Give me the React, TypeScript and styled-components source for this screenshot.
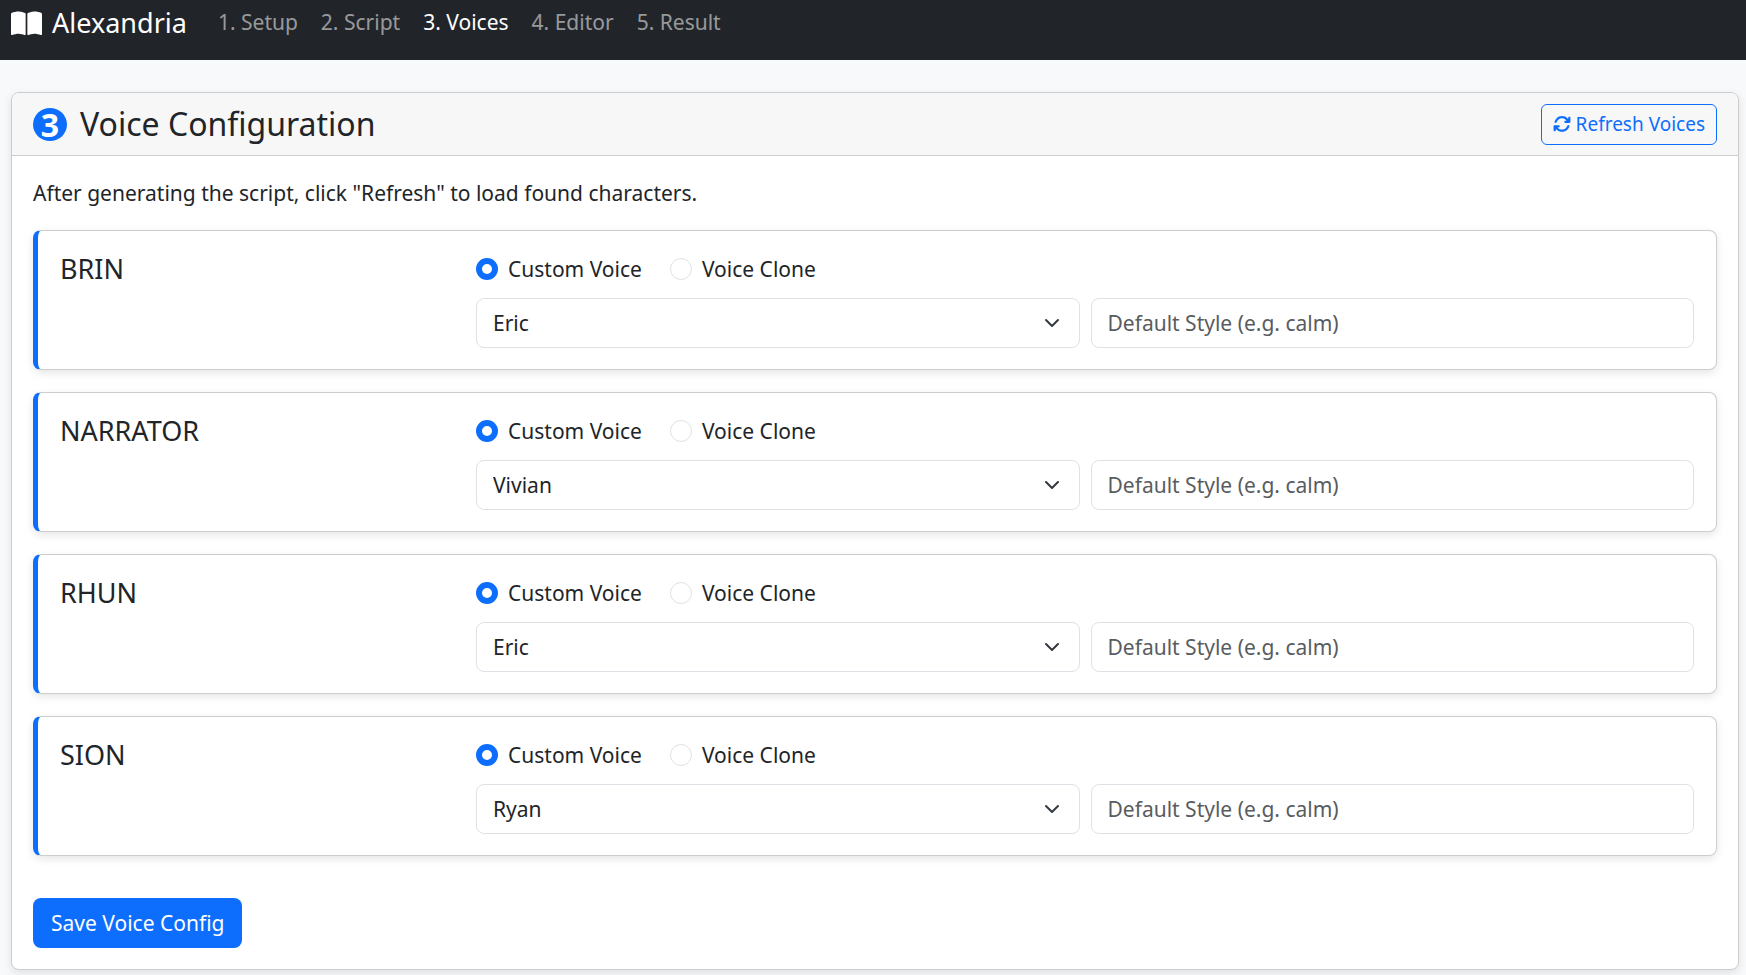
import React, { useState } from "react";
import styled, { createGlobalStyle } from "styled-components";
import { FaBookOpen, FaArrowsRotate } from "react-icons/fa6";

const GlobalStyle = createGlobalStyle`
  *, *::before, *::after { box-sizing: border-box; }
  body {
    margin: 0;
    background: #f8f9fa;
    color: #212529;
    font-family: "Noto Sans", "Liberation Sans", sans-serif;
    font-size: 21px;
    line-height: 32px;
  }
  button, input, select { font: inherit; color: inherit; margin: 0; }
`;

const Navbar = styled.nav`
  display: flex;
  align-items: flex-start;
  height: 60px;
  padding: 2px 11px 0;
  background: #212529;
`;

const Brand = styled.a`
  display: flex;
  align-items: center;
  gap: 10px;
  margin-right: 31px;
  color: #fff;
  font-size: 27px;
  line-height: 42px;
  text-decoration: none;
`;

const NavList = styled.ul`
  display: flex;
  gap: 23px;
  margin: 0;
  padding: 4px 0 0;
  list-style: none;
`;

const NavLink = styled.a<{ $active?: boolean }>`
  color: ${(p) => (p.$active ? "#fff" : "rgba(255, 255, 255, 0.55)")};
  text-decoration: none;
`;

const Page = styled.main`
  padding: 32px 7px 32px 11px;
`;

const Card = styled.section`
  background: #fff;
  border: 1px solid #cccdce;
  border-radius: 8px;
  box-shadow: 0 3px 8px rgba(0, 0, 0, 0.1);
`;

const CardHeader = styled.header`
  display: flex;
  align-items: center;
  justify-content: space-between;
  padding: 10px 21px;
  background: #f7f7f7;
  border-bottom: 1px solid #cccdce;
  border-radius: 7px 7px 0 0;
`;

const Title = styled.h2`
  display: flex;
  align-items: center;
  gap: 13px;
  margin: 0;
  font-size: 32px;
  font-weight: 400;
  line-height: 42px;
`;

const StepNumber = styled.span`
  width: 34px;
  height: 33px;
  border-radius: 50%;
  background: #0d6efd;
  color: #fff;
  font-size: 32px;
  font-weight: 700;
  line-height: 34px;
  text-align: center;
`;

const RefreshButton = styled.button`
  display: flex;
  align-items: center;
  gap: 5px;
  height: 41px;
  padding: 0 11px;
  border: 1px solid #0d6efd;
  border-radius: 6px;
  background: transparent;
  color: #0d6efd;
  font-size: 19px;
  cursor: pointer;
`;

const CardBody = styled.div`
  padding: 21px;
`;

const Intro = styled.p`
  margin: 0 0 21px;
`;

const VoiceCard = styled.article`
  display: grid;
  grid-template-columns: minmax(0, 1fr) minmax(0, 3fr);
  gap: 10px;
  margin-bottom: 22px;
  padding: 21px 22px;
  border: 1px solid #cccdce;
  border-left: 5px solid #0d6efd;
  border-radius: 8px;
  background: #fff;
  box-shadow: 0 3px 8px rgba(0, 0, 0, 0.1);
`;

const VoiceName = styled.h3`
  margin: 0;
  font-size: 27px;
  font-weight: 400;
  line-height: 34px;
`;

const Modes = styled.div`
  display: flex;
  gap: 28px;
  margin-bottom: 12px;
`;

const Mode = styled.label`
  display: flex;
  align-items: center;
  gap: 10px;
  line-height: 34px;
`;

const Radio = styled.input`
  appearance: none;
  width: 22px;
  height: 22px;
  border: 1px solid #dee2e6;
  border-radius: 50%;
  background: #fff;

  &:checked {
    border: 6px solid #0d6efd;
  }
`;

const Fields = styled.div`
  display: grid;
  grid-template-columns: repeat(2, minmax(0, 1fr));
  gap: 11px;
`;

const SelectBox = styled.div`
  display: grid;
  align-items: center;

  > * { grid-area: 1 / 1; }
  > svg {
    justify-self: end;
    margin-right: 17px;
    pointer-events: none;
  }
`;

const Select = styled.select`
  appearance: none;
  width: 100%;
  height: 50px;
  padding: 0 48px 0 16px;
  border: 1px solid #dee2e6;
  border-radius: 8px;
  background: #fff;
`;

const TextInput = styled.input`
  width: 100%;
  height: 50px;
  padding: 0 16px;
  border: 1px solid #dee2e6;
  border-radius: 8px;
  background: #fff;

  &::placeholder { color: #595c5f; opacity: 1; }
`;

const SaveButton = styled.button`
  height: 50px;
  margin-top: 20px;
  padding: 0 18px;
  border: 0;
  border-radius: 8px;
  background: #0d6efd;
  color: #fff;
  cursor: pointer;
`;

const steps = ["1. Setup", "2. Script", "3. Voices", "4. Editor", "5. Result"];
const speakers = ["Eric", "Vivian", "Ryan"];
const characters = [
  { name: "BRIN", voice: "Eric" },
  { name: "NARRATOR", voice: "Vivian" },
  { name: "RHUN", voice: "Eric" },
  { name: "SION", voice: "Ryan" },
];

function Voice({ name, voice }: { name: string; voice: string }) {
  const [mode, setMode] = useState("custom");
  return (
    <VoiceCard>
      <VoiceName>{name}</VoiceName>
      <div>
        <Modes>
          <Mode>
            <Radio type="radio" name={`mode-${name}`} checked={mode === "custom"} onChange={() => setMode("custom")} />
            Custom Voice
          </Mode>
          <Mode>
            <Radio type="radio" name={`mode-${name}`} checked={mode === "clone"} onChange={() => setMode("clone")} />
            Voice Clone
          </Mode>
        </Modes>
        <Fields>
          <SelectBox>
            <Select defaultValue={voice} aria-label={`${name} voice`}>
              {speakers.map((s) => (
                <option key={s}>{s}</option>
              ))}
            </Select>
            <svg width="22" height="16" viewBox="0 0 16 16" aria-hidden="true">
              <path d="m2 5 6 6 6-6" fill="none" stroke="#343a40" strokeWidth="2" strokeLinecap="round" strokeLinejoin="round" />
            </svg>
          </SelectBox>
          <TextInput type="text" placeholder="Default Style (e.g. calm)" aria-label={`${name} default style`} />
        </Fields>
      </div>
    </VoiceCard>
  );
}

export default function App() {
  return (
    <>
      <GlobalStyle />
      <Navbar>
        <Brand href="#">
          <FaBookOpen size={31} aria-hidden="true" />
          Alexandria
        </Brand>
        <NavList>
          {steps.map((s) => (
            <li key={s}>
              <NavLink href="#" $active={s === "3. Voices"}>{s}</NavLink>
            </li>
          ))}
        </NavList>
      </Navbar>
      <Page>
        <Card>
          <CardHeader>
            <Title>
              <StepNumber>3</StepNumber>
              Voice Configuration
            </Title>
            <RefreshButton type="button">
              <FaArrowsRotate size={18} aria-hidden="true" />
              Refresh Voices
            </RefreshButton>
          </CardHeader>
          <CardBody>
            <Intro>After generating the script, click "Refresh" to load found characters.</Intro>
            {characters.map((c) => (
              <Voice key={c.name} {...c} />
            ))}
            <SaveButton type="button">Save Voice Config</SaveButton>
          </CardBody>
        </Card>
      </Page>
    </>
  );
}
